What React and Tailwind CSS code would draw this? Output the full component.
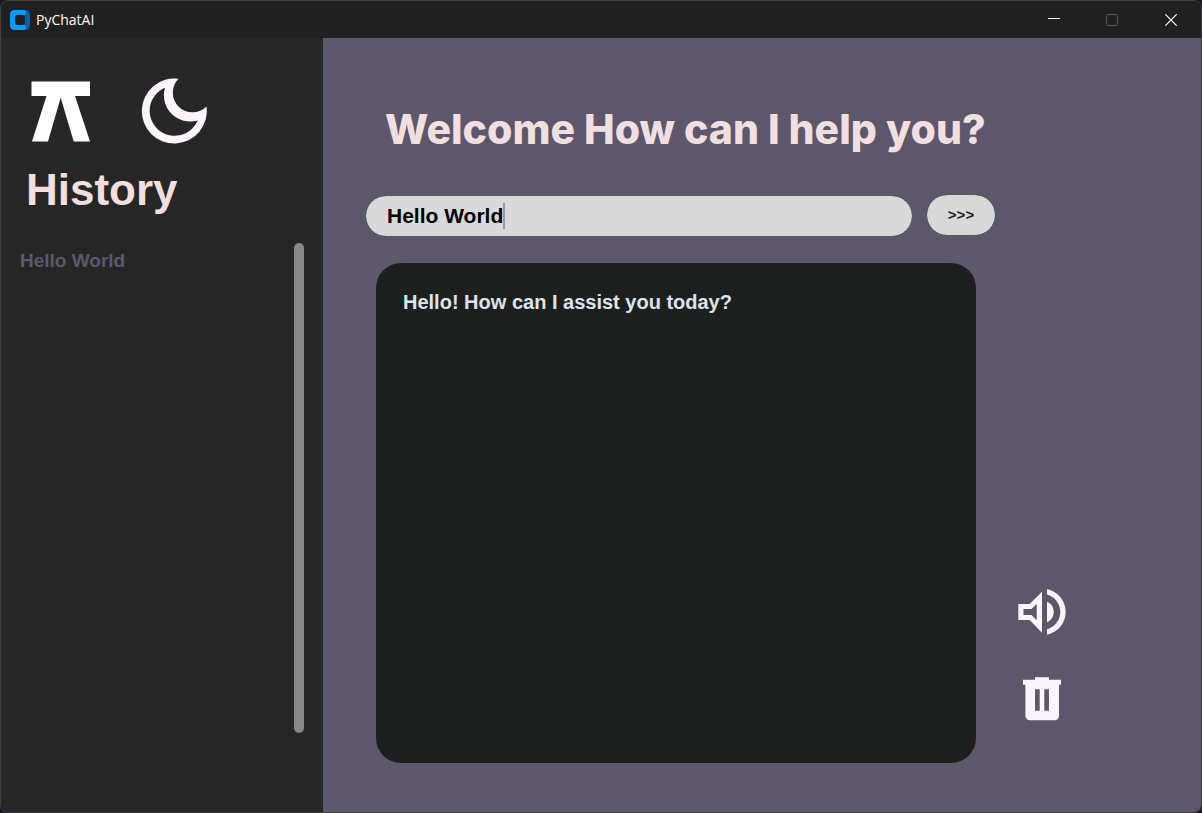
import { useState } from "react";

function TitleBar() {
  return (
    <header className="flex h-[37px] items-center justify-between bg-[#202020]">
      <div className="flex items-center gap-[6px] pl-[9px]">
        <svg className="size-[20px]" viewBox="0 0 20 20" aria-hidden="true">
          <rect width="20" height="20" rx="4.5" fill="#0b5ea8" />
          <path d="M4.5 0H13.500A2.700 2.700 0 0 1 16.200 2.500A2.500 2.500 0 0 1 13.700 5V15A2.500 2.500 0 0 1 16.200 17.500A2.700 2.700 0 0 1 13.500 20H4.500A4.500 4.500 0 0 1 0 15.500v-11A4.500 4.500 0 0 1 4.500 0z" fill="#0a9bff" />
          <rect x="5" y="5" width="10" height="10" rx="2.500" fill="#202020" />
        </svg>
        <span className="text-[14px] leading-[20px] text-white">PyChatAI</span>
      </div>
      <div className="flex h-full">
        <button aria-label="Minimize" className="flex w-[58px] items-center justify-center">
          <svg className="size-[12px]" viewBox="0 0 12 12">
            <path d="M0 4.500h12" stroke="#fff" />
          </svg>
        </button>
        <button aria-label="Maximize" disabled className="flex w-[58px] items-center justify-center">
          <svg className="size-[12px]" viewBox="0 0 12 12">
            <rect x=".5" y=".5" width="11" height="11" rx="1" fill="none" stroke="#565656" />
          </svg>
        </button>
        <button aria-label="Close" className="flex w-[60px] items-center justify-center">
          <svg className="size-[12px]" viewBox="0 0 12 12">
            <path d="M.3.3l11.400 11.400M11.700.3L.3 11.700" stroke="#fff" strokeWidth="1.200" />
          </svg>
        </button>
      </div>
    </header>
  );
}

function LogoIcon() {
  return (
    <svg className="h-[62px] w-[59px]" viewBox="0 0 59 62" fill="#fff">
      <path d="M.5 1.500h58.500v14.500H44L59 61.500H42.700L29.700 17.800 17 61.500H1L15.500 16H.5z" />
    </svg>
  );
}

function MoonIcon() {
  return (
    <svg className="size-[66px]" viewBox="0 0 66 66" fill="#fdf5fd">
      <path
        fillRule="evenodd"
        d="M37.500.8A32.500 32.500 0 1 0 65.500 28.500A19.500 19.500 0 1 1 37.500.8zM24 9.700A25 25 0 1 0 56.700 42.500A26.300 26.300 0 0 1 24 9.700z"
      />
    </svg>
  );
}

function SpeakerIcon() {
  return (
    <svg className="h-[46px] w-[48px]" viewBox="0 0 48 46" fill="#fdf5fd">
      <path
        fillRule="evenodd"
        d="M.3 15H11.700L24 2.700V43.700L11.700 31H.3zM5.500 20V26H13.500L18.700 31.200V14.800L13.500 20z"
      />
      <path d="M29 12.700C33.500 14.800 35.700 18.500 35.700 23S33.500 31.200 29 33.300z" />
      <path d="M29 0C39.500 2.200 47.700 11.500 47.700 23S39.500 43.500 29 45.700V40.200C36.800 38 42.300 31.200 42.300 23S36.800 7.700 29 5.500z" />
    </svg>
  );
}

function TrashIcon() {
  return (
    <svg className="h-[44px] w-[38px]" viewBox="0 0 38 44" fill="#fdf5fd">
      <path
        fillRule="evenodd"
        d="M12 .3H26V2.800H38V7.800H36V38.500C36 41.300 34 43.300 31.200 43.300H7.200C4.400 43.300 2.400 41.300 2.400 38.500V7.800H0V2.800H12zM12 12.300V33.700H16.700V12.300zM21.300 12.300V33.700H26V12.300z"
      />
    </svg>
  );
}

export default function App() {
  const [prompt, setPrompt] = useState("Hello World");
  return (
    <div className="min-h-screen bg-[#161a24] font-['Open_Sans','Noto_Sans',sans-serif]">
      <div className="flex min-h-screen flex-col overflow-hidden rounded-[8px] border border-[#3d3e44]">
        <TitleBar />
        <div className="flex flex-1 font-['Liberation_Sans',Arial,sans-serif] font-bold">
          <aside className="flex w-[322px] shrink-0 flex-col bg-[#262626]">
            <div className="flex items-center gap-[51px] pt-[40px] pl-[30px]">
              <button aria-label="PyChatAI home">
                <LogoIcon />
              </button>
              <button aria-label="Toggle dark mode">
                <MoonIcon />
              </button>
            </div>
            <h2 className="mt-[20px] pl-[25px] text-[44px] leading-[52px] text-[#f2dfdf]">History</h2>
            <div className="mt-[27px] flex h-[490px] justify-between pr-[19px] pl-[19px]">
              <ul className="pt-[7px]">
                <li>
                  <button className="text-[19px] leading-[22px] text-[#5d576b]">Hello World</button>
                </li>
              </ul>
              <div className="w-[10px] rounded-full bg-[#878787]" />
            </div>
          </aside>

          <main className="min-w-0 flex-1 bg-[#5d576b] pl-[43px]">
            <h1 className="mt-[65px] pl-[19px] font-['Inter',sans-serif] text-[41px] leading-[52px] font-extrabold text-[#f2dfdf]">
              Welcome How can I help you?
            </h1>
            <form
              className="mt-[40px] flex max-w-[629px] items-start gap-[15px]"
              onSubmit={(e) => e.preventDefault()}
            >
              <div className="relative mt-px min-w-0 flex-1">
                <input
                  aria-label="Prompt"
                  value={prompt}
                  onChange={(e) => setPrompt(e.target.value)}
                  className="h-[40px] w-full rounded-full bg-[#d9d9d9] px-[21px] text-[21px] leading-[24px] text-black outline outline-[#545b5c]"
                />
                <span className="absolute top-[7px] left-[137px] h-[26px] w-[2px] bg-[#9a9a9a]" />
              </div>
              <button
                type="submit"
                aria-label="Send"
                className="h-[40px] w-[68px] rounded-full bg-[#d9d9d9] text-[15px] leading-[20px] text-[#1d1f1e] outline outline-[#545b5c]"
              >
                &gt;&gt;&gt;
              </button>
            </form>
            <div className="mt-[27px] mb-[49px] flex gap-[42px] pl-[10px]">
              <section className="min-h-[500px] max-w-[600px] flex-1 rounded-[25px] bg-[#1d1f1e] px-[27px] py-[27px]">
                <p className="text-[20px] leading-[24px] text-[#dce4ee]">Hello! How can I assist you today?</p>
              </section>
              <div className="flex flex-col items-center justify-end gap-[42px] pb-[42px]">
                <button aria-label="Read aloud">
                  <SpeakerIcon />
                </button>
                <button aria-label="Delete history">
                  <TrashIcon />
                </button>
              </div>
            </div>
          </main>
        </div>
      </div>
    </div>
  );
}
